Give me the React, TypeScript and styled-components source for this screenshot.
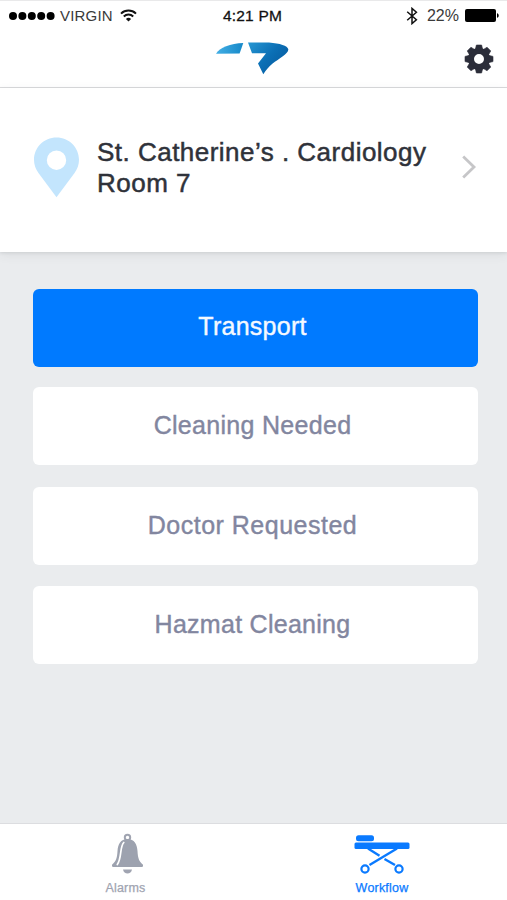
import React from "react";
import styled, { createGlobalStyle } from "styled-components";

const GlobalStyle = createGlobalStyle`
  * { box-sizing: border-box; }
  body {
    margin: 0;
    background: #eaecee;
    font-family: "Liberation Sans", Arial, Helvetica, sans-serif;
  }
`;

const Screen = styled.div`
  display: flex;
  flex-direction: column;
  width: 507px;
  height: 900px;
  background: #eaecee;
  overflow: hidden;
`;

const Header = styled.header`
  flex: none;
  height: 88px;
  background: #fff;
  border-top: 1px solid #e9e9ea;
  border-bottom: 1px solid #dcdddf;
`;

const StatusBar = styled.div`
  display: grid;
  grid-template-columns: 1fr auto 1fr;
  align-items: center;
  height: 29px;
  padding: 0 8px 0 9px;
  color: #111;
`;

const StatusGroup = styled.div<{ $end?: boolean }>`
  display: flex;
  align-items: center;
  justify-content: ${(p) => (p.$end ? "flex-end" : "flex-start")};
`;

const StatusText = styled.span<{ $spacing: number; $size?: number; $strong?: boolean }>`
  font-size: ${(p) => p.$size ?? 15}px;
  line-height: 18px;
  letter-spacing: ${(p) => p.$spacing}px;
  white-space: nowrap;
  color: ${(p) => (p.$strong ? "#111" : "#3a3a3a")};
  -webkit-text-stroke: ${(p) => (p.$strong ? "0.3px #111" : "0")};
  margin-right: ${(p) => (p.$strong ? "3px" : "0")};
`;

const Signal = styled.svg`
  display: block;
  margin-right: 5px;
`;

const Wifi = styled.svg`
  display: block;
  margin-left: 7px;
`;

const Bluetooth = styled.svg`
  display: block;
  margin-right: 9px;
`;

const Battery = styled.svg`
  display: block;
  margin-left: 6px;
`;

const BrandBar = styled.div`
  display: grid;
  grid-template-columns: 1fr 74px 1fr;
  align-items: center;
  height: 57px;
  padding: 0 13px 0 11px;
`;

const Logo = styled.svg`
  grid-column: 2;
  display: block;
`;

const SettingsButton = styled.button`
  justify-self: end;
  padding: 0;
  border: 0;
  background: none;
  display: block;
  height: 30px;
`;

const Location = styled.section`
  flex: none;
  display: flex;
  align-items: center;
  height: 164px;
  padding: 0 30px 5px 33px;
  background: #fff;
  box-shadow: 0 1px 3px rgba(60, 64, 72, 0.12), 0 3px 10px rgba(60, 64, 72, 0.08);
`;

const Pin = styled.svg`
  flex: none;
  margin-right: 18px;
`;

const Place = styled.h1`
  flex: 1;
  margin: 0;
  font-size: 26px;
  font-weight: 400;
  line-height: 31px;
  color: #2f323a;
  -webkit-text-stroke: 0.5px #2f323a;
  white-space: nowrap;
`;

const PlaceLine = styled.span<{ $spacing: number }>`
  display: block;
  letter-spacing: ${(p) => p.$spacing}px;
`;

const Chevron = styled.svg`
  flex: none;
  margin-bottom: 2px;
`;

const Actions = styled.main`
  flex: 1;
  display: flex;
  flex-direction: column;
  gap: 21.5px;
  padding: 37px 29px 0 33px;
`;

const Action = styled.button<{ $primary?: boolean; $spacing: number }>`
  flex: none;
  height: 78px;
  width: 445px;
  padding: 0 6px ${(p) => (p.$primary ? "4px" : "2px")} 0;
  border: 0;
  border-radius: 6px;
  margin-bottom: ${(p) => (p.$primary ? "-1.5px" : "0")};
  background: ${(p) => (p.$primary ? "#007aff" : "#fff")};
  color: ${(p) => (p.$primary ? "#f4f9ff" : "#82869f")};
  font: 400 25px/30px "Liberation Sans", Arial, sans-serif;
  letter-spacing: ${(p) => p.$spacing}px;
  -webkit-text-stroke: 0.4px currentColor;
`;

const TabBar = styled.nav`
  flex: none;
  display: grid;
  grid-template-columns: 251px 256px;
  height: 77px;
  background: #fff;
  border-top: 1px solid #dcdde0;
`;

const Tab = styled.a<{ $active?: boolean }>`
  display: flex;
  flex-direction: column;
  align-items: center;
  padding-top: 8px;
  padding-left: ${(p) => (p.$active ? "6px" : "0")};
  color: ${(p) => (p.$active ? "#0a7aff" : "#a0a4b1")};
`;

const TabLabel = styled.span<{ $spacing: number }>`
  margin-top: 5px;
  font-size: 12.5px;
  line-height: 16px;
  letter-spacing: ${(p) => p.$spacing}px;
  -webkit-text-stroke: 0.25px currentColor;
`;

const teeth = [0, 45, 90, 135, 180, 225, 270, 315];

const actions = [
  { label: "Transport", primary: true, spacing: 0.25 },
  { label: "Cleaning Needed", spacing: 0.3 },
  { label: "Doctor Requested", spacing: 0.5 },
  { label: "Hazmat Cleaning", spacing: 0.27 },
];

export default function App() {
  return (
    <>
      <GlobalStyle />
      <Screen>
        <Header>
          <StatusBar>
            <StatusGroup>
              <Signal width="46" height="10" viewBox="0 0 46 10">
                {[4, 13.4, 22.8, 32.2, 41.6].map((x) => (
                  <circle key={x} cx={x} cy="5" r="4" fill="#000" />
                ))}
              </Signal>
              <StatusText $spacing={0.2}>VIRGIN</StatusText>
              <Wifi width="17" height="13" viewBox="0 0 17 13" fill="none" stroke="#111" strokeWidth="2">
                <path d="M1 4.6a10.8 10.8 0 0 1 15 0" />
                <path d="M3.8 7.5a6.8 6.8 0 0 1 9.4 0" />
                <path d="M8.5 12.6 5.9 9.9a3.8 3.8 0 0 1 5.2 0Z" fill="#111" stroke="none" />
              </Wifi>
            </StatusGroup>
            <StatusText $spacing={0.2} $size={15.5} $strong>4:21 PM</StatusText>
            <StatusGroup $end>
              <Bluetooth width="12" height="18" viewBox="0 0 12 18" fill="none" stroke="#111" strokeWidth="1.5">
                <path d="M1.2 4.8 10.4 12.8 6 16.6V1.4l4.4 3.8L1.2 13.2" />
              </Bluetooth>
              <StatusText $spacing={0} $size={16}>22%</StatusText>
              <Battery width="34" height="13" viewBox="0 0 34 13">
                <rect width="31" height="13" rx="2" fill="#000" />
                <path d="M32 4.2c2.3.6 2.3 4 0 4.6Z" fill="#000" />
              </Battery>
            </StatusGroup>
          </StatusBar>
          <BrandBar>
            <Logo width="74" height="34" viewBox="0 0 74 34">
              <defs>
                <linearGradient id="wing" x1="0" x2="1" y1="0" y2="0">
                  <stop offset="0" stopColor="#43afe5" />
                  <stop offset="1" stopColor="#1688c8" />
                </linearGradient>
                <linearGradient id="arrow" x1="0" x2="1" y1="0" y2="0.7">
                  <stop offset="0" stopColor="#2797d3" />
                  <stop offset="0.55" stopColor="#0b6fb5" />
                  <stop offset="1" stopColor="#075b9f" />
                </linearGradient>
              </defs>
              <path d="M0 11.800C3.500 5.700 14.500 1.500 27.300 1L23.600 11.600Z" fill="url(#wing)" />
              <path d="M32 .6H53C64 1.400 71.600 4 72.300 7.200c.4 4.500-9 9-16 14.600-4 3.200-6.200 6.500-9 10.500L42 21.500 50 11.300H36Z" fill="url(#arrow)" />
            </Logo>
            <SettingsButton aria-label="Settings">
              <svg width="30" height="30" viewBox="-15 -15 30 30">
                <circle r="8" fill="none" stroke="#2b2d39" strokeWidth="6" />
                {teeth.map((angle) => (
                  <path key={angle} d="M-3.7-9.5-2.6-14h5.2l1.1 4.5Z" fill="#2b2d39" stroke="#2b2d39" strokeWidth=".6" strokeLinejoin="round" transform={`rotate(${angle})`} />
                ))}
              </svg>
            </SettingsButton>
          </BrandBar>
        </Header>
        <Location>
          <Pin width="46" height="61" viewBox="0 0 46 61">
            <path fillRule="evenodd" fill="#c3e5fd" d="M23.500.5C11 .5 1 10.500 1 22.800c0 5 1.600 9 4.300 13L23.500 60.300l18.200-24.500c2.700-4 4.300-8 4.300-13C46 10.500 36 .5 23.500.5Zm0 13a9.700 9.700 0 1 1 0 19.400 9.700 9.700 0 0 1 0-19.400Z" />
          </Pin>
          <Place>
            <PlaceLine $spacing={0.48}>St. Catherine’s . Cardiology</PlaceLine>
            <PlaceLine $spacing={0.5}>Room 7</PlaceLine>
          </Place>
          <Chevron width="16" height="24" viewBox="0 0 16 24" fill="none" stroke="#c6c6c8" strokeWidth="2.8">
            <path d="M2.200 1.600 13 12 2.200 22.400" />
          </Chevron>
        </Location>
        <Actions>
          {actions.map((a) => (
            <Action key={a.label} $primary={a.primary} $spacing={a.spacing}>
              {a.label}
            </Action>
          ))}
        </Actions>
        <TabBar>
          <Tab>
            <svg width="34" height="43" viewBox="0 0 34 43">
              <circle cx="18.500" cy="5.500" r="2.700" fill="none" stroke="#a0a4b1" strokeWidth="2" />
              <path fill="#9da2af" d="M18.500 7c7 0 9.500 5 10 12 .4 7 1.500 10.500 5.300 13.500.5 1 .2 2.500-.8 2.500H4c-1 0-1.300-1.500-.8-2.500C7 29.500 8.100 26 8.500 19c.5-7 3-12 10-12Z" />
              <path d="M14.800 10.500C10.500 15 13 26 8.300 32.500" fill="none" stroke="#fff" strokeWidth="1.700" strokeLinecap="round" />
              <path d="M14 37.500h9c-.7 5.200-8.300 5.200-9 0Z" fill="#a0a4b1" />
            </svg>
            <TabLabel $spacing={0.15}>Alarms</TabLabel>
          </Tab>
          <Tab $active>
            <svg width="56" height="43" viewBox="0 0 56 43" fill="none" stroke="#0a7aff">
              <rect x="2" y="3.200" width="18" height="6" rx="2.500" fill="#0a7aff" stroke="none" />
              <rect x=".5" y="10.500" width="55" height="6.500" rx="1.500" fill="#0a7aff" stroke="none" />
              <path d="m14 16.500 11.500 7.300M30.500 27 41 33M43 16.500 15.500 33" strokeWidth="2.400" />
              <circle cx="11" cy="37" r="3.600" strokeWidth="2.200" />
              <circle cx="45" cy="37" r="3.600" strokeWidth="2.200" />
            </svg>
            <TabLabel $spacing={0.2}>Workflow</TabLabel>
          </Tab>
        </TabBar>
      </Screen>
    </>
  );
}
